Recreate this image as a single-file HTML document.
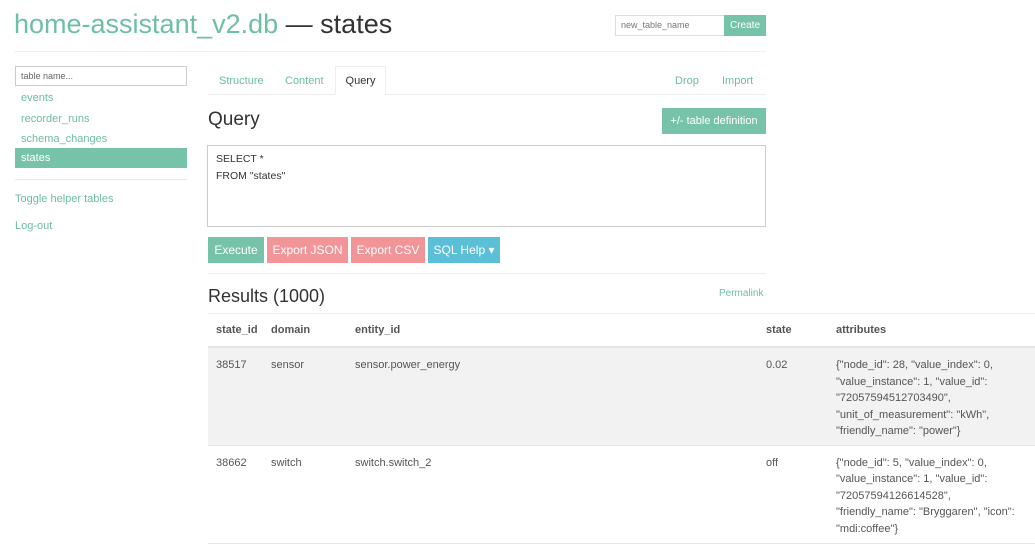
<!DOCTYPE html>
<html><head><style>
body{margin:0;width:1035px;height:544px;overflow:hidden;background:#fff;font-family:"Liberation Sans",sans-serif;color:#555;position:relative}
.a{position:absolute}
.t{color:#6cbda0}
.btn{position:absolute;top:237px;height:26px;line-height:26px;color:#fff;font-size:12px;text-align:center}
td,th{padding:0 0 0 8px;vertical-align:top;font-size:11px;text-align:left}
</style></head><body>
<div class="a" style="left:14px;top:9px;font-size:27px;white-space:nowrap"><span class="t" style="color:#6ec0a3">home-assistant_v2.db</span> <span style="color:#333">— states</span></div>
<div class="a" style="left:615px;top:15px;border:1px solid #ddd;font-size:9px;line-height:19px;padding-left:5px;box-sizing:border-box;width:110px;height:21px;color:#777">new_table_name</div>
<div class="a" style="left:724px;top:15px;width:42px;height:21px;background:#77c3a9;color:#fff;font-size:10px;line-height:21px;text-align:center">Create</div>
<div class="a" style="left:14px;top:51px;width:752px;height:1px;background:#f0f0ec"></div>
<div class="a" style="left:15px;top:66px;width:172px;height:20px;border:1px solid #ccc;box-sizing:border-box;font-size:9px;line-height:18px;padding-left:5px;color:#666">table name...</div>
<div class="a t" style="left:21px;top:88px;font-size:11px;line-height:20.5px">events<br>recorder_runs<br>schema_changes</div>
<div class="a" style="left:15px;top:148px;width:172px;height:20px;background:#77c3a9;color:#fff;font-size:11px;line-height:21px;padding-left:6px;box-sizing:border-box">states</div>
<div class="a" style="left:15px;top:179px;width:172px;height:1px;background:#e8e8e8"></div>
<div class="a t" style="left:15px;top:193px;font-size:11px">Toggle helper tables</div>
<div class="a t" style="left:15px;top:220px;font-size:11px">Log-out</div>
<div class="a" style="left:208px;top:94px;width:558px;height:1px;background:#eee"></div>
<div class="a t" style="left:219px;top:75px;font-size:11px">Structure</div>
<div class="a t" style="left:285px;top:75px;font-size:11px">Content</div>
<div class="a" style="left:335px;top:66px;width:51px;height:29px;border:1px solid #eee;border-bottom:1px solid #fff;background:#fff;font-size:11px;line-height:29px;text-align:center;color:#333;box-sizing:border-box">Query</div>
<div class="a t" style="left:675px;top:75px;font-size:11px">Drop</div>
<div class="a t" style="left:722px;top:75px;font-size:11px">Import</div>
<div class="a" style="left:208px;top:109px;font-size:19px;color:#333">Query</div>
<div class="a" style="left:662px;top:108px;width:104px;height:26px;background:#77c3a9;color:#fff;font-size:11px;line-height:26px;text-align:center">+/- table definition</div>
<div class="a" style="left:207px;top:145px;width:559px;height:82px;border:1px solid #ccc;box-sizing:border-box;font-size:10.5px;line-height:17px;padding:5px 8px;color:#333">SELECT *<br>FROM "states"</div>
<div class="btn" style="left:208px;width:56px;background:#77c3a9">Execute</div>
<div class="btn" style="left:267px;width:81px;background:#f29599">Export JSON</div>
<div class="btn" style="left:351px;width:74px;background:#f29599">Export CSV</div>
<div class="btn" style="left:428px;width:72px;background:#5bbfd8">SQL Help ▾</div>
<div class="a" style="left:208px;top:273px;width:558px;height:1px;background:#eee"></div>
<div class="a" style="left:208px;top:286px;font-size:18px;color:#333">Results (1000)</div>
<div class="a t" style="left:719px;top:288px;font-size:10px">Permalink</div>
<div class="a" style="left:208px;top:313px;width:827px;height:1px;background:#eee"></div>
<table class="a" style="left:208px;top:314px;width:827px;border-collapse:collapse">
<tr style="height:33px;border-bottom:2px solid #e5e5e5"><th style="vertical-align:middle;width:47px;color:#555">state_id</th><th style="vertical-align:middle;width:76px">domain</th><th style="vertical-align:middle;width:403px">entity_id</th><th style="vertical-align:middle;width:62px">state</th><th style="vertical-align:middle">attributes</th></tr>
<tr style="height:98px;background:#f2f2f2;border-bottom:1px solid #e8e8e8;line-height:16.5px"><td style="padding-top:9px">38517</td><td style="padding-top:9px">sensor</td><td style="padding-top:9px">sensor.power_energy</td><td style="padding-top:9px">0.02</td><td style="padding-top:9px">{"node_id": 28, "value_index": 0,<br>"value_instance": 1, "value_id":<br>"72057594512703490",<br>"unit_of_measurement": "kWh",<br>"friendly_name": "power"}</td></tr>
<tr style="height:98px;line-height:16.5px;border-bottom:1px solid #e8e8e8"><td style="padding-top:9px">38662</td><td style="padding-top:9px">switch</td><td style="padding-top:9px">switch.switch_2</td><td style="padding-top:9px">off</td><td style="padding-top:9px">{"node_id": 5, "value_index": 0,<br>"value_instance": 1, "value_id":<br>"72057594126614528",<br>"friendly_name": "Bryggaren", "icon":<br>"mdi:coffee"}</td></tr>
</table>
</body></html>
